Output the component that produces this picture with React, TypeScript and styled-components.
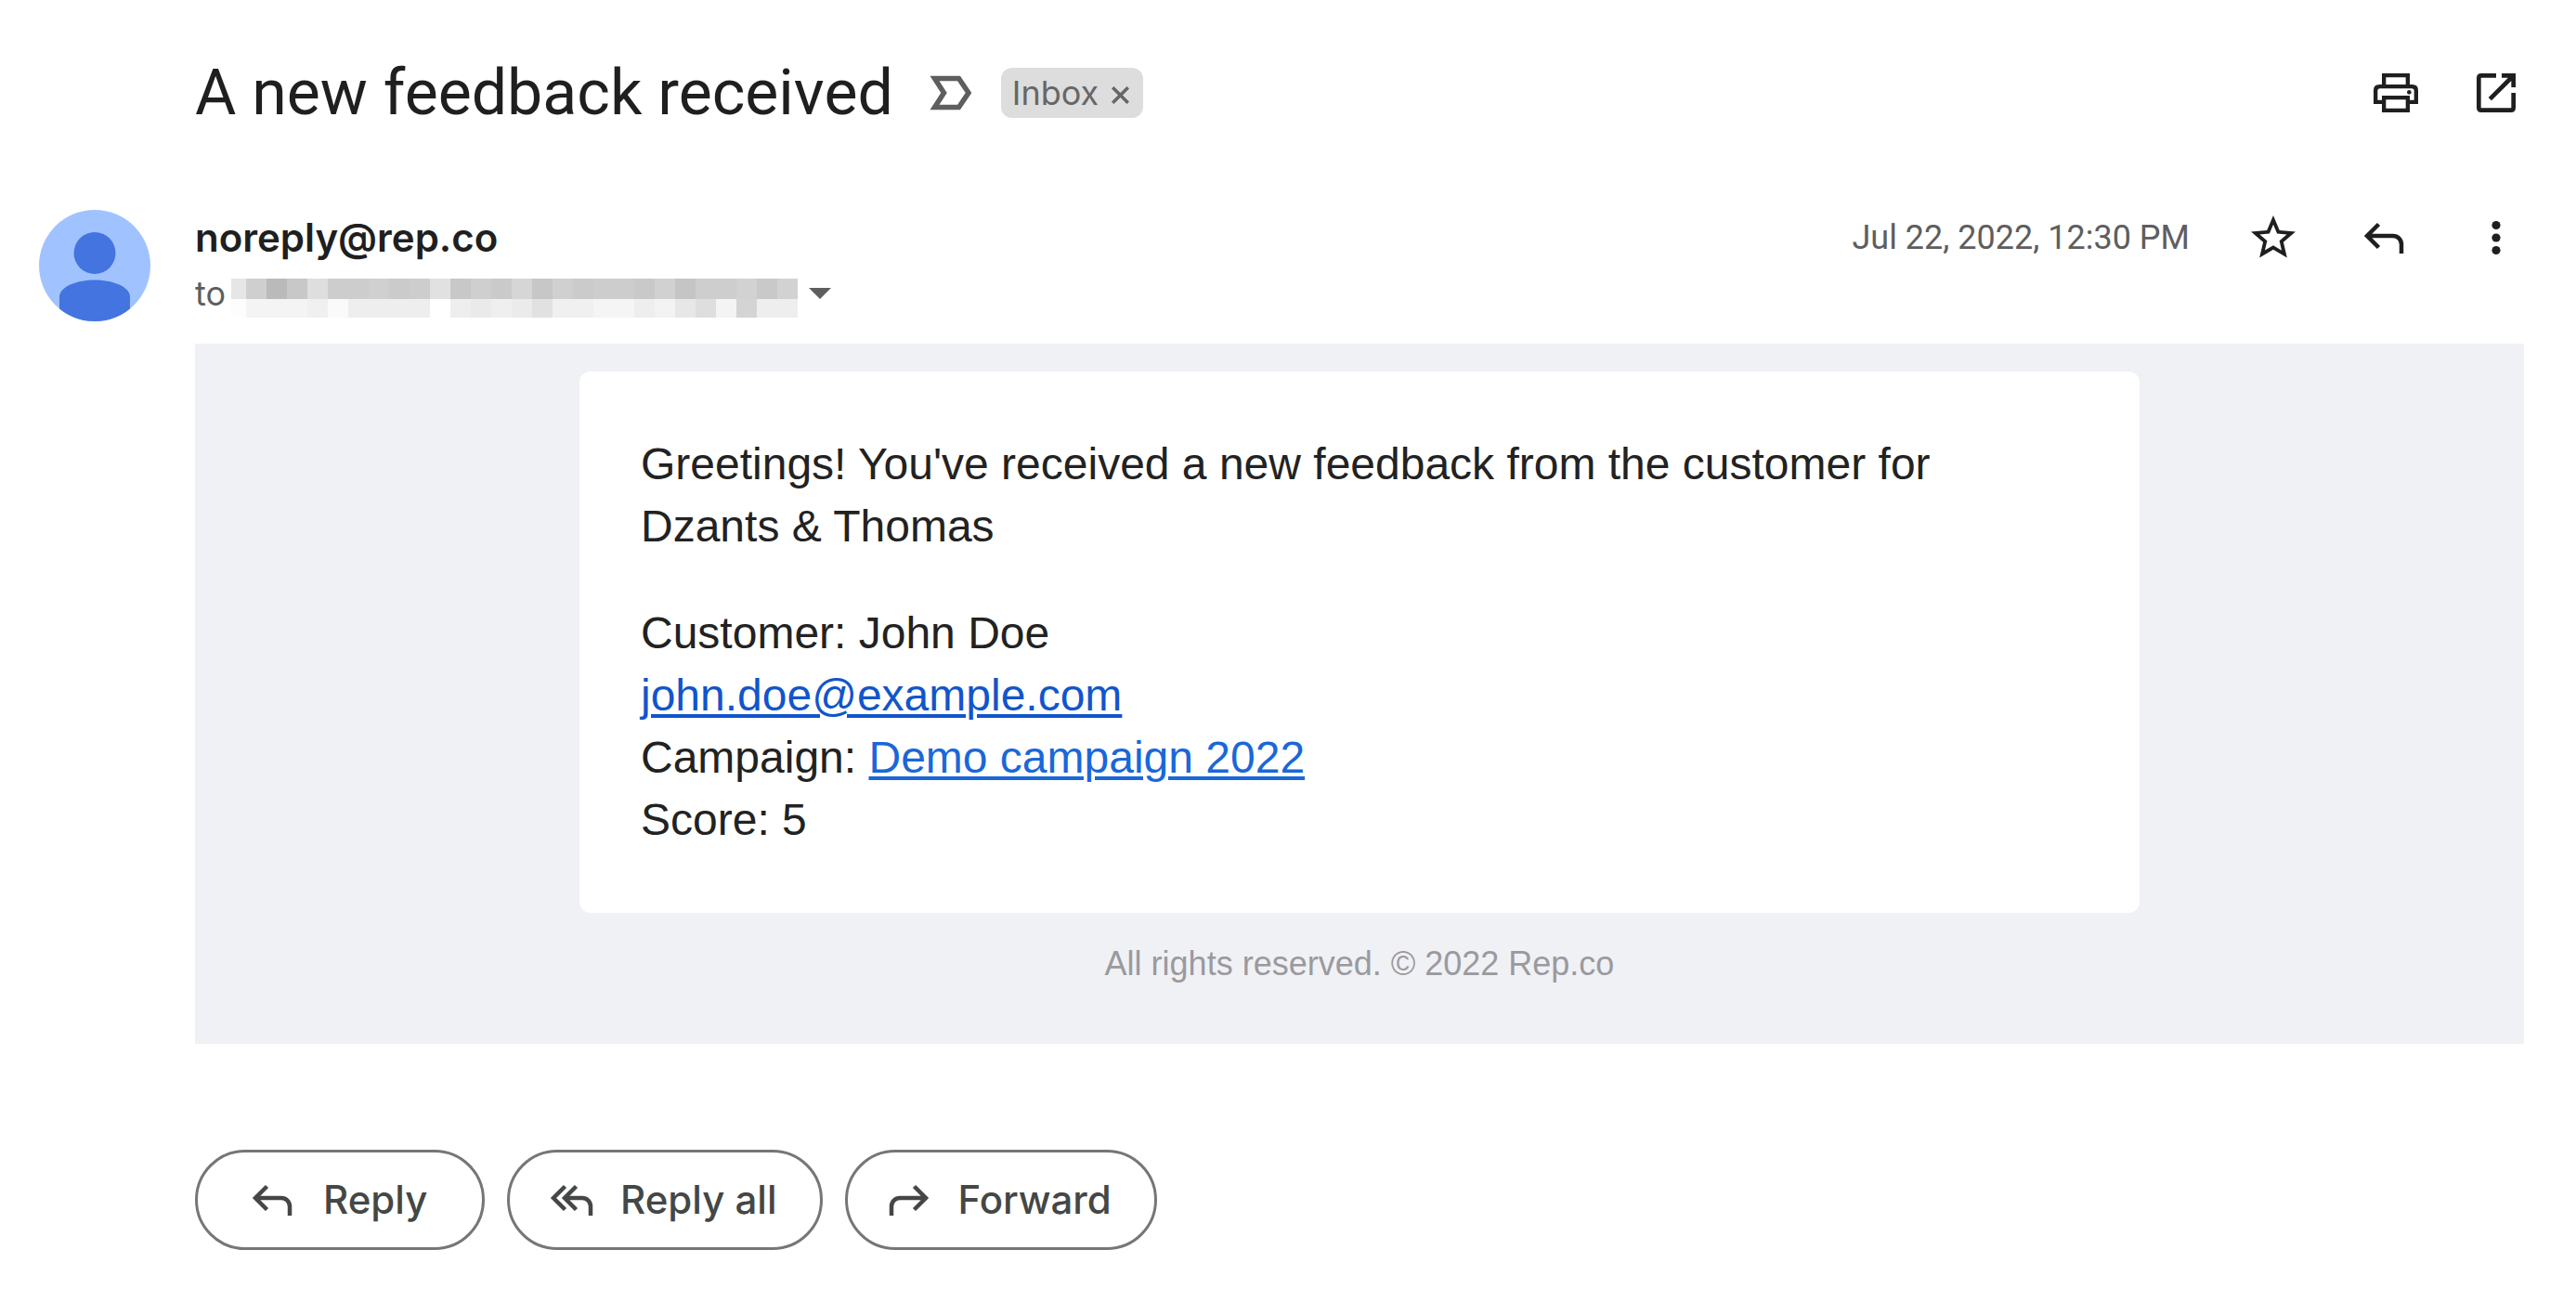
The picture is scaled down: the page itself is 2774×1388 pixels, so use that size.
import React from 'react';
import styled, { createGlobalStyle } from 'styled-components';

const color = {
  ink: '#1f1f1f',
  text: '#222222',
  muted: '#5e5e5e',
  button: '#444746',
  outline: '#747775',
  canvas: '#f0f1f5',
};

const GlobalStyle = createGlobalStyle`
  *, *::before, *::after { box-sizing: border-box; }
  body { margin: 0; background: #ffffff; color: ${color.ink}; }
  h1, h2, p { margin: 0; font-weight: 400; }
  button { font: inherit; color: inherit; background: none; border: 0; padding: 0; cursor: pointer; }
  svg { display: block; flex: none; }
`;

const Page = styled.main`
  padding: 60px 56px 42px 42px;
  font-family: Roboto, 'Liberation Sans', sans-serif;
`;

const SubjectBar = styled.header`
  display: flex;
  align-items: center;
  gap: 24px;
  min-height: 80px;
  padding-left: 168px;
`;

const Subject = styled.h1`
  padding-right: 8px;
  font-size: 68px;
  line-height: 80px;
`;

const Actions = styled.div<{ $gap: number }>`
  display: flex;
  align-items: center;
  gap: ${(p) => p.$gap}px;
  margin-left: auto;
  color: ${color.ink};
`;

const IconButton = styled.button<{ $muted?: boolean }>`
  flex: none;
  display: flex;
  align-items: center;
  justify-content: center;
  width: 60px;
  height: 60px;
  color: ${(p) => (p.$muted ? color.muted : color.ink)};
`;

const Label = styled.span`
  display: flex;
  align-items: center;
  gap: 14px;
  height: 54px;
  padding: 0 15px 0 12px;
  border-radius: 12px;
  background: #dddddd;
  color: #666666;
  font-family: Inter, sans-serif;
  font-size: 36px;
  line-height: 54px;
`;

const LabelRemove = styled.button`
  display: flex;
  padding-top: 4px;
`;

const MessageHeader = styled.section`
  display: flex;
  align-items: flex-start;
  margin-top: 86px;
`;

const Sender = styled.div`
  display: flex;
  flex-direction: column;
  margin-left: 48px;
`;

const SenderAddress = styled.h2`
  font-family: Inter, sans-serif;
  font-size: 42px;
  font-weight: 600;
  line-height: 60px;
`;

const Recipient = styled.div`
  display: flex;
  align-items: center;
  gap: 6px;
  height: 60px;
  color: ${color.muted};
  font-family: Inter, sans-serif;
  font-size: 36px;
  line-height: 60px;
`;

const Redacted = styled.div`
  display: flex;
  padding-top: 10px;
`;

const DetailsToggle = styled.button`
  display: flex;
  align-items: center;
  height: 60px;
  padding-left: 6px;
`;

const Timestamp = styled.time`
  color: ${color.muted};
  font-size: 36px;
  line-height: 60px;
`;

const MailCanvas = styled.article`
  display: flex;
  flex-direction: column;
  align-items: center;
  gap: 30px;
  margin: 24px 0 0 168px;
  padding: 30px 30px 61px;
  background: ${color.canvas};
  color: ${color.text};
  font-family: 'Liberation Sans', Arial, sans-serif;
`;

const Card = styled.div`
  display: flex;
  flex-direction: column;
  gap: 48px;
  width: 100%;
  max-width: 1680px;
  padding: 66px 66px 67px;
  border-radius: 12px;
  background: #ffffff;
  font-size: 48px;
  line-height: 67px;
`;

const MailLink = styled.a<{ $tone: string }>`
  color: ${(p) => p.$tone};
  text-decoration: underline;
  text-decoration-thickness: 4px;
  text-underline-offset: 4px;
`;

const Legal = styled.p`
  color: #9a9a9e;
  font-size: 36px;
  line-height: 50px;
`;

const ReplyBar = styled.footer`
  display: flex;
  flex-wrap: wrap;
  gap: 24px;
  margin: 114px 0 0 168px;
`;

const PillButton = styled.button<{ $start: number }>`
  && {
    display: flex;
    align-items: center;
    gap: 24px;
    min-width: 312px;
    height: 108px;
    padding: 0 46px 0 ${(p) => p.$start}px;
    border: 3px solid ${color.outline};
    border-radius: 54px;
    color: ${color.button};
    font-family: Inter, sans-serif;
    font-size: 42px;
    font-weight: 500;
    line-height: 60px;
  }
`;

const StrokeIcon = ({ children, width = 5 }: { children: React.ReactNode; width?: number }) => (
  <svg width="60" height="60" viewBox="0 0 60 60" fill="none" stroke="currentColor" strokeWidth={width} aria-hidden="true">
    {children}
  </svg>
);

const ReplyIcon = () => (
  <StrokeIcon width={4.5}>
    <path d="M23.500 15.500 11 28 23.500 40.500M11 28H39a9 9 0 0 1 9 9V47" />
  </StrokeIcon>
);

const ReplyAllIcon = () => (
  <StrokeIcon width={4.5}>
    <path d="M24.500 15.500 12 28 24.500 40.500M36.500 15.500 24 28 36.500 40.500M24 28H43a9 9 0 0 1 9 9V47" />
  </StrokeIcon>
);

const ForwardIcon = () => (
  <StrokeIcon width={4.5}>
    <path d="M36.500 15.500 49 28 36.500 40.500M49 28H21a9 9 0 0 0-9 9V47" />
  </StrokeIcon>
);

const ImportantIcon = () => (
  <StrokeIcon width={5.5}>
    <path d="M12.500 14.500H38.500L49 30 38.500 45.500H12.500L22.500 30Z" />
  </StrokeIcon>
);

const PrintIcon = () => (
  <svg width="60" height="60" viewBox="90 30 180 180" aria-hidden="true">
    <path
      fill="currentColor"
      fillRule="evenodd"
      d="M135 57H225V93H233Q252 93 252 112V156H225V183H135V156H108V112Q108 93 127 93H135ZM148 70V93H212V70ZM129 106Q121 106 121 114V143H135V129H225V143H239V114Q239 106 231 106ZM148 142V170H212V142Z"
    />
    <circle cx="223" cy="118" r="7" fill="currentColor" />
  </svg>
);

const OpenIcon = () => (
  <svg width="60" height="60" viewBox="414 30 180 180" fill="none" stroke="currentColor" strokeWidth="14" aria-hidden="true">
    <path d="M504 64H456Q448 64 448 72V168Q448 176 456 176H552Q560 176 560 168V120" />
    <path d="M522 64H560V102M558 66 484 140" />
  </svg>
);

const StarIcon = () => (
  <svg width="60" height="60" viewBox="-0.5 -0.5 25 25" fill="currentColor" aria-hidden="true">
    <path d="M22 9.240l-7.190-.620L12 2 9.190 8.630 2 9.240l5.460 4.730L5.820 21 12 17.270 18.180 21l-1.630-7.030L22 9.240zM12 15.400l-3.760 2.270 1-4.280-3.320-2.880 4.380-.380L12 6.100l1.710 4.040 4.380.380-3.320 2.880 1 4.280L12 15.400z" />
  </svg>
);

const MoreIcon = () => (
  <svg width="60" height="60" viewBox="0 0 60 60" fill="currentColor" aria-hidden="true">
    <circle cx="30" cy="16.500" r="4.600" />
    <circle cx="30" cy="30" r="4.600" />
    <circle cx="30" cy="43.500" r="4.600" />
  </svg>
);

const Avatar = () => (
  <svg width="120" height="120" viewBox="0 0 120 120" role="img" aria-label="noreply@rep.co">
    <clipPath id="avatar-disc">
      <circle cx="60" cy="60" r="60" />
    </clipPath>
    <g clipPath="url(#avatar-disc)">
      <rect width="120" height="120" fill="#a0c3ff" />
      <circle cx="60" cy="46.500" r="22.500" fill="#4374e0" />
      <path d="M22 120V94C22 82 42 75.500 60 75.500S98 82 98 94V120Z" fill="#4374e0" />
    </g>
  </svg>
);

const CELL = 22;
const FIRST_CELL = 16;
const topShades =
  'e6 cf ba c8 de cd cd d0 cb cd e1 c8 cf ca d6 c7 d0 cb cd cd c9 d1 c5 ce ce d2 c9 d2'.split(' ');
const bottomShades =
  'fd f4 f4 f4 f0 fa ee ee ee ee ff ee ea ef eb e1 f0 f0 f5 f5 ee f3 e7 de f4 d4 ee ee'.split(' ');

const Mosaic = () => (
  <svg width="610" height="42" viewBox="0 0 610 42" shapeRendering="crispEdges" role="img" aria-label="Hidden recipient">
    {[topShades, bottomShades].map((row, r) =>
      row.map((s, i) => (
        <rect
          key={`${r}-${i}`}
          x={i === 0 ? 0 : FIRST_CELL + (i - 1) * CELL}
          y={r * CELL}
          width={i === 0 ? FIRST_CELL : CELL}
          height={r === 0 ? CELL : 20}
          fill={`#${s}${s}${s}`}
        />
      )),
    )}
  </svg>
);

export default function App() {
  return (
    <>
      <GlobalStyle />
      <Page>
        <SubjectBar>
          <Subject>A new feedback received</Subject>
          <IconButton $muted aria-label="Mark as important">
            <ImportantIcon />
          </IconButton>
          <Label>
            Inbox
            <LabelRemove aria-label="Remove label Inbox">
              <svg width="19" height="19" viewBox="0 0 19 19" fill="none" stroke="currentColor" strokeWidth="3.500" aria-hidden="true">
                <path d="M1.200 1.200 17.800 17.800M17.800 1.200 1.200 17.800" />
              </svg>
            </LabelRemove>
          </Label>
          <Actions $gap={48}>
            <IconButton aria-label="Print">
              <PrintIcon />
            </IconButton>
            <IconButton aria-label="Open in new window">
              <OpenIcon />
            </IconButton>
          </Actions>
        </SubjectBar>

        <MessageHeader>
          <Avatar />
          <Sender>
            <SenderAddress>noreply@rep.co</SenderAddress>
            <Recipient>
              to
              <Redacted>
                <Mosaic />
              </Redacted>
              <DetailsToggle aria-label="Show details">
                <svg width="24" height="12" viewBox="0 0 24 12" fill="currentColor" aria-hidden="true">
                  <path d="M0 0H24L12 12Z" />
                </svg>
              </DetailsToggle>
            </Recipient>
          </Sender>
          <Actions $gap={60}>
            <Timestamp dateTime="2022-07-22T12:30">Jul 22, 2022, 12:30 PM</Timestamp>
            <IconButton aria-label="Star">
              <StarIcon />
            </IconButton>
            <IconButton aria-label="Reply">
              <ReplyIcon />
            </IconButton>
            <IconButton aria-label="More">
              <MoreIcon />
            </IconButton>
          </Actions>
        </MessageHeader>

        <MailCanvas>
          <Card>
            <p>
              Greetings! You've received a new feedback from the customer for Dzants &amp; Thomas
            </p>
            <p>
              Customer: John Doe
              <br />
              <MailLink $tone="#1155cc" href="mailto:john.doe@example.com">
                john.doe@example.com
              </MailLink>
              <br />
              Campaign:{' '}
              <MailLink $tone="#1a67d9" href="#campaign">
                Demo campaign 2022
              </MailLink>
              <br />
              Score: 5
            </p>
          </Card>
          <Legal>All rights reserved. © 2022 Rep.co</Legal>
        </MailCanvas>

        <ReplyBar>
          <PillButton $start={51}>
            <ReplyIcon />
            Reply
          </PillButton>
          <PillButton $start={35}>
            <ReplyAllIcon />
            Reply all
          </PillButton>
          <PillButton $start={35}>
            <ForwardIcon />
            Forward
          </PillButton>
        </ReplyBar>
      </Page>
    </>
  );
}
